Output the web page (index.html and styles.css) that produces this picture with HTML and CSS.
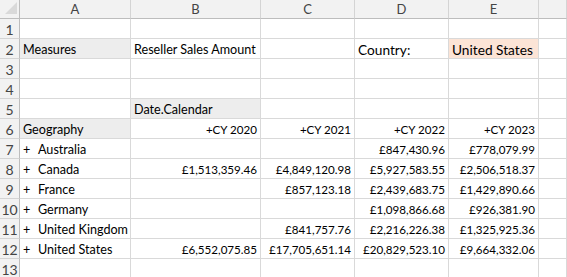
FILE: index.html
```html
<!DOCTYPE html>
<html>
<head>
<meta charset="utf-8">
<link rel="stylesheet" href="styles.css">
</head>
<body>
<div class="sheet">
  <div class="corner"><svg width="19" height="18" viewBox="0 0 19 18"><polygon points="5,14 17,14 17,2" fill="#d9d9d9"/></svg></div>
  <div class="ch">A</div><div class="ch">B</div><div class="ch">C</div><div class="ch">D</div><div class="ch">E</div><div class="ch"></div>

  <div class="rh">1</div><div class="c"></div><div class="c"></div><div class="c"></div><div class="c"></div><div class="c"></div><div class="c"></div>

  <div class="rh">2</div><div class="c lbl grey">Measures</div><div class="c lbl">Reseller Sales Amount</div><div class="c"></div><div class="c big">Country:</div><div class="c big peach">United States</div><div class="c"></div>

  <div class="rh">3</div><div class="c"></div><div class="c"></div><div class="c"></div><div class="c"></div><div class="c"></div><div class="c"></div>

  <div class="rh">4</div><div class="c"></div><div class="c"></div><div class="c"></div><div class="c"></div><div class="c"></div><div class="c"></div>

  <div class="rh">5</div><div class="c"></div><div class="c lbl grey">Date.Calendar</div><div class="c"></div><div class="c"></div><div class="c"></div><div class="c"></div>

  <div class="rh">6</div><div class="c lbl grey">Geography</div><div class="c num">+CY 2020</div><div class="c num">+CY 2021</div><div class="c num">+CY 2022</div><div class="c num">+CY 2023</div><div class="c"></div>

  <div class="rh">7</div><div class="c lbl"><span class="pm">+</span>Australia</div><div class="c num"></div><div class="c num"></div><div class="c num">£847,430.96</div><div class="c num">£778,079.99</div><div class="c"></div>

  <div class="rh">8</div><div class="c lbl"><span class="pm">+</span>Canada</div><div class="c num">£1,513,359.46</div><div class="c num">£4,849,120.98</div><div class="c num">£5,927,583.55</div><div class="c num">£2,506,518.37</div><div class="c"></div>

  <div class="rh">9</div><div class="c lbl"><span class="pm">+</span>France</div><div class="c num"></div><div class="c num">£857,123.18</div><div class="c num">£2,439,683.75</div><div class="c num">£1,429,890.66</div><div class="c"></div>

  <div class="rh">10</div><div class="c lbl"><span class="pm">+</span>Germany</div><div class="c num"></div><div class="c num"></div><div class="c num">£1,098,866.68</div><div class="c num">£926,381.90</div><div class="c"></div>

  <div class="rh">11</div><div class="c lbl"><span class="pm">+</span>United Kingdom</div><div class="c num"></div><div class="c num">£841,757.76</div><div class="c num">£2,216,226.38</div><div class="c num">£1,325,925.36</div><div class="c"></div>

  <div class="rh">12</div><div class="c lbl"><span class="pm">+</span>United States</div><div class="c num">£6,552,075.85</div><div class="c num">£17,705,651.14</div><div class="c num">£20,829,523.10</div><div class="c num">£9,664,332.06</div><div class="c"></div>

  <div class="rh">13</div><div class="c"></div><div class="c"></div><div class="c"></div><div class="c"></div><div class="c"></div><div class="c"></div>
</div>
</body>
</html>
```

FILE: styles.css
```css
html, body {
  margin: 0;
  padding: 0;
  background: #ffffff;
}
body {
  font-family: Lato, "Noto Sans", sans-serif;
  color: #000;
  overflow: hidden;
}
.sheet {
  display: grid;
  grid-template-columns: 20px 111px 130px 94px 94px 90px 1fr;
  grid-template-rows: 19px repeat(13, 20px);
  width: 567px;
}
.corner {
  background: #f2f2f2;
  border-right: 1px solid #bdbdbd;
  border-bottom: 1px solid #bdbdbd;
  box-sizing: border-box;
  overflow: hidden;
}
.corner svg { display: block; }
.ch {
  background: #f2f2f2;
  border-right: 1px solid #d4d4d4;
  border-bottom: 1px solid #bdbdbd;
  box-sizing: border-box;
  text-align: center;
  font-size: 13px;
  line-height: 18px;
  color: #444;
}
.rh {
  background: #f2f2f2;
  border-right: 1px solid #bdbdbd;
  border-bottom: 1px solid #d4d4d4;
  box-sizing: border-box;
  text-align: center;
  font-size: 14px;
  line-height: 21px;
  color: #444;
  white-space: nowrap;
  overflow: hidden;
}
.c {
  border-right: 1px solid #d9d9d9;
  border-bottom: 1px solid #d9d9d9;
  box-sizing: border-box;
  padding: 0 3px;
  white-space: nowrap;
  font-size: 12px;
  line-height: 21px;
}
.lbl { font-size: 12.6px; }
.num { text-align: right; font-size: 11.6px; }
.big { font-size: 13.7px; }
.grey { background: #ededed; }
.peach { background: #fce4d6; }
.pm {
  display: inline-block;
  width: 15px;
}
```
